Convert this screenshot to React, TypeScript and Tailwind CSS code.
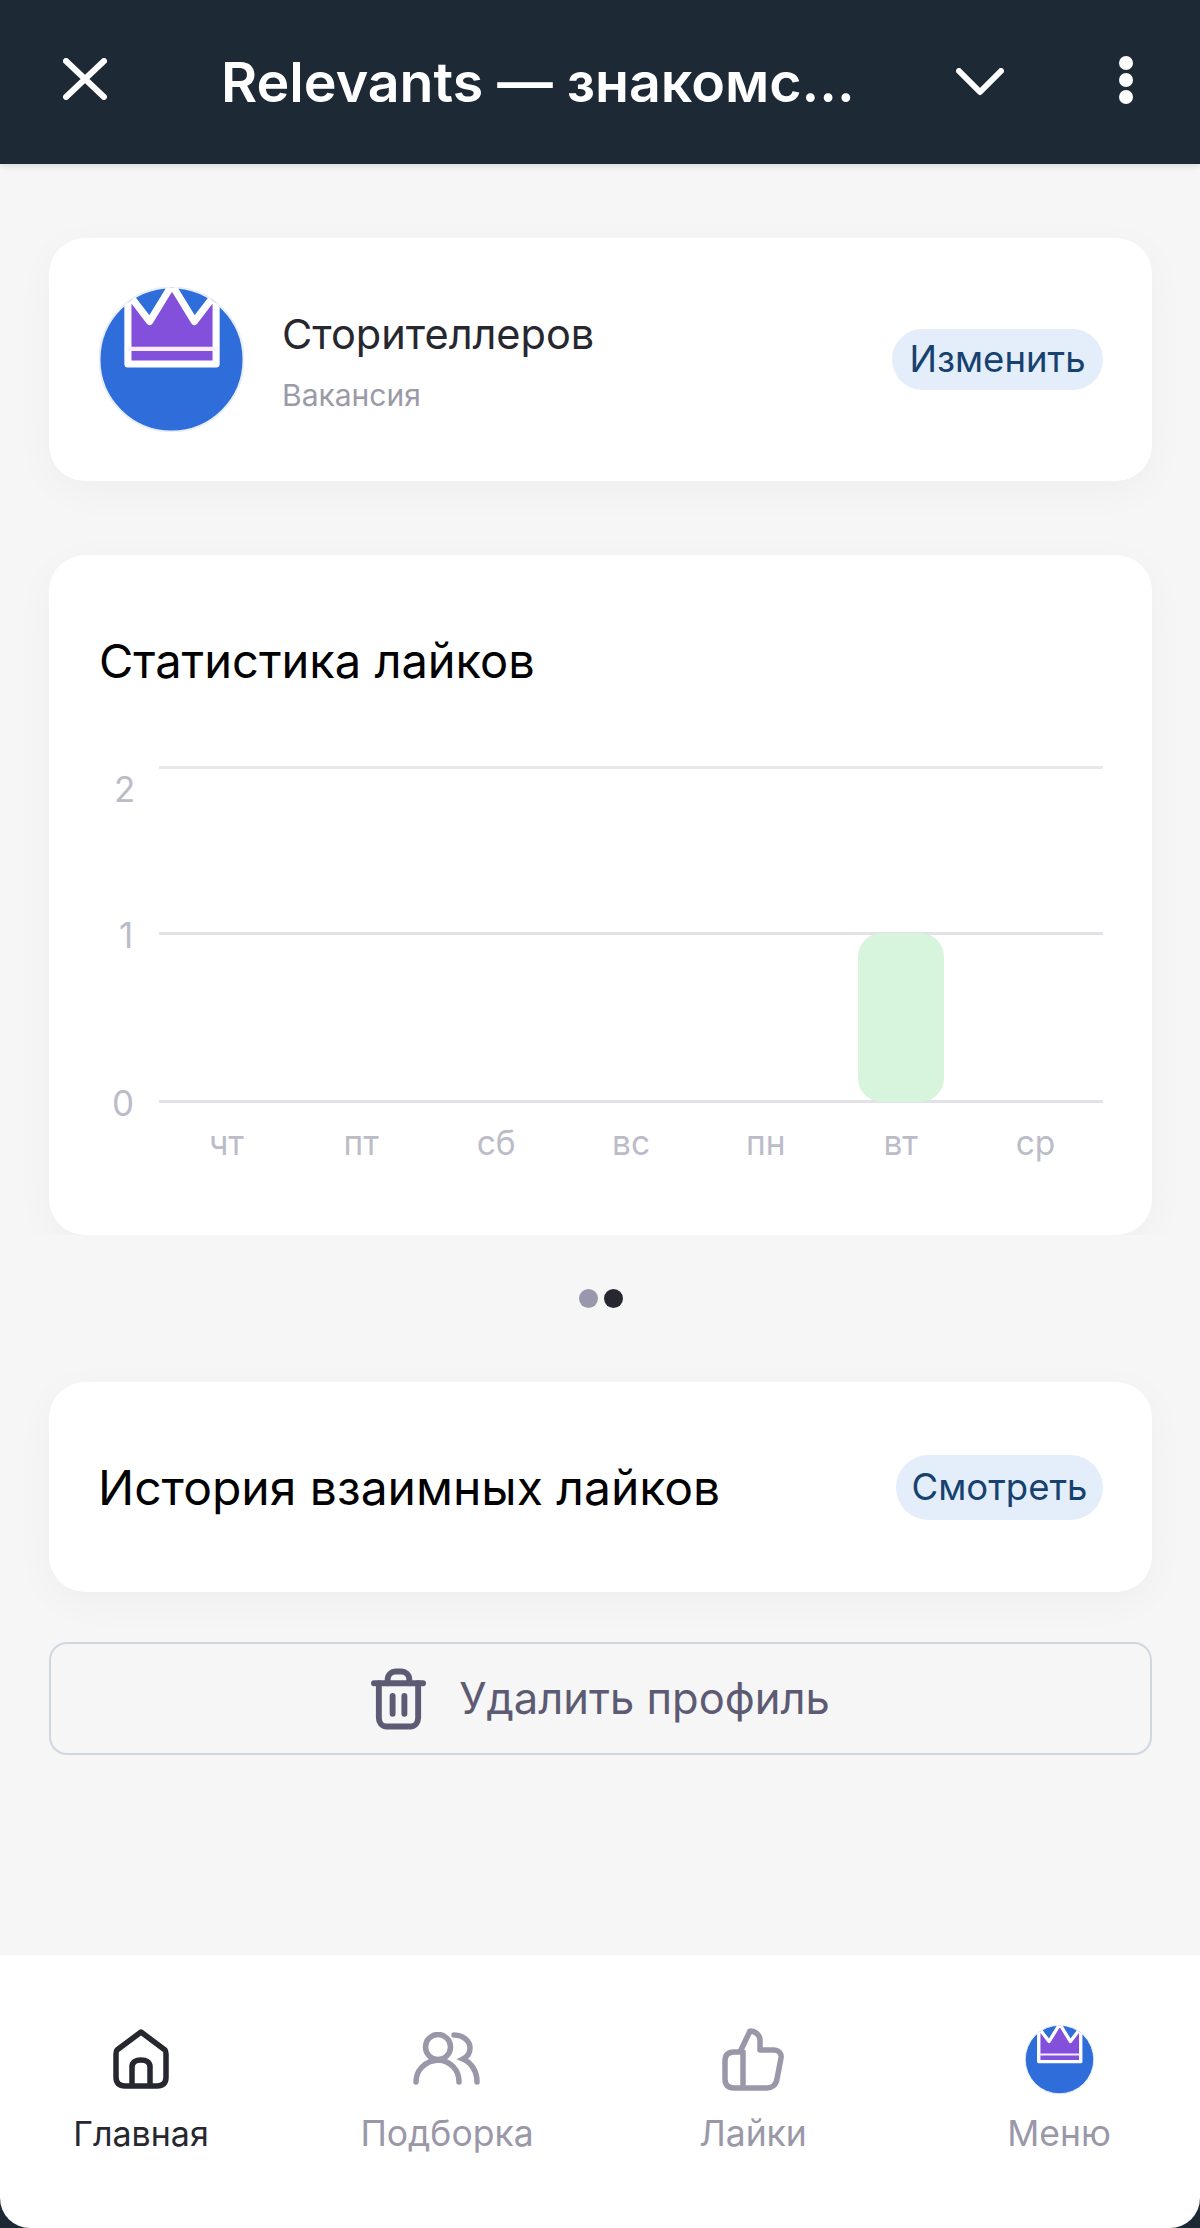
import React from "react";

function Avatar({ size, ring }: { size: number; ring: string }) {
  return (
    <svg width={size} height={size} viewBox="0 0 143 143" className="block shrink-0">
      <defs>
        <clipPath id={`clip${size}`}>
          <circle cx="71.5" cy="71.5" r="71" />
        </clipPath>
      </defs>
      <circle cx="71.5" cy="71.5" r="71" fill="#2f6ddb" stroke={ring} strokeWidth="2" />
      <g clipPath={`url(#clip${size})`}>
        <path
          d="M28.5 6 L50 34 L72 -2 L94 34 L115.5 6 V76 H28.5 Z"
          fill="#8350dc"
          stroke="#ffffff"
          strokeWidth="7"
          strokeLinejoin="round"
        />
        <path d="M28 61 H116" stroke="#f6eefc" strokeWidth="4" />
      </g>
    </svg>
  );
}

function Pill({ children, w, h }: { children: React.ReactNode; w: string; h: string }) {
  return (
    <div className={`flex items-center justify-center rounded-full bg-[#e3eefa] text-[36.5px] text-[#17416f] ${w} ${h}`}>
      {children}
    </div>
  );
}

const days = ["чт", "пт", "сб", "вс", "пн", "вт", "ср"];

function Chart() {
  return (
    <div className="mt-[75px] flex">
      <div className="flex w-[60px] flex-col text-[35px] leading-[40px] text-[#bcbcc8]">
        <div className="mt-[3px] pl-[15px]">2</div>
        <div className="mt-[106px] pl-[20px]">1</div>
        <div className="mt-[128px] pl-[13px]">0</div>
      </div>
      <div className="w-[944px]">
        <svg width="944" height="337" viewBox="0 0 944 337" className="block">
          <rect x="0" y="0" width="944" height="3" fill="#e7e7ec" />
          <rect x="0" y="166" width="944" height="3" fill="#e2e2e8" />
          <rect x="0" y="334" width="944" height="3" fill="#e2e2e8" />
          <rect x="699" y="167" width="86" height="169" rx="24" fill="#d7f4dc" />
        </svg>
        <div className="mt-[20px] grid grid-cols-7 text-center text-[33.5px] leading-[40px] text-[#bcbcc8]">
          {days.map((d) => (
            <div key={d}>{d}</div>
          ))}
        </div>
      </div>
    </div>
  );
}

function Tab({ icon, label, active }: { icon: React.ReactNode; label: string; active?: boolean }) {
  return (
    <div className={`flex w-[200px] flex-col items-center ${active ? "text-[#26272f]" : "text-[#9a98a8]"}`}>
      <div className="flex h-[70px] items-center justify-center">{icon}</div>
      <div className={`mt-[18px] leading-[44px] ${active ? "text-[34px]" : "text-[35.5px]"}`}>{label}</div>
    </div>
  );
}

export default function App() {
  return (
    <div
      className="flex h-[2228px] w-[1200px] flex-col overflow-hidden bg-[#1e2936]"
      style={{ fontFamily: '"Inter", "Noto Sans", sans-serif' }}
    >
      <header className="z-10 flex h-[164px] shrink-0 items-center bg-[#1e2936] pb-[6px] text-white shadow-[0_2px_6px_rgba(0,0,0,0.12)]">
        <svg width="44" height="42" viewBox="0 0 44 42" className="ml-[63px] shrink-0" fill="none" stroke="#fff" strokeWidth="6" strokeLinecap="round">
          <path d="M3 3 L41 39 M41 3 L3 39" />
        </svg>
        <div className="ml-[114px] mt-[5px] w-[640px] whitespace-nowrap text-[55.5px] font-semibold leading-[64px]">
          Relevants — знакомс...
        </div>
        <svg width="48" height="28" viewBox="0 0 48 28" className="ml-[95px] mt-[5px] shrink-0" fill="none" stroke="#fff" strokeWidth="6" strokeLinecap="round" strokeLinejoin="round">
          <path d="M3 3 L24 24 L45 3" />
        </svg>
        <svg width="16" height="50" viewBox="0 0 16 50" className="ml-[114px] mt-[2px] shrink-0" fill="#fff">
          <circle cx="8" cy="8" r="7" />
          <circle cx="8" cy="25" r="7" />
          <circle cx="8" cy="42" r="7" />
        </svg>
      </header>

      <main className="flex min-h-0 flex-1 flex-col bg-[#f6f6f6] pl-[49px] pr-[48px] pt-[74px]">
        <section className="flex h-[243px] shrink-0 items-center rounded-[36px] bg-white pl-[50px] pr-[49px] shadow-[0_10px_40px_rgba(0,0,0,0.035)]">
          <Avatar size={145} ring="#e6eefa" />
          <div className="ml-[38px] flex-1">
            <div className="mt-[3px] text-[41.5px] leading-[50px] text-[#26272f]">Сторителлеров</div>
            <div className="mt-[18px] text-[30px] leading-[36px] text-[#9b9aa8]">Вакансия</div>
          </div>
          <Pill w="w-[211px]" h="h-[61px]">Изменить</Pill>
        </section>

        <div className="-ml-[49px] -mr-[48px] mt-[44px] shrink-0 overflow-hidden pl-[49px] pr-[48px] pt-[30px]">
          <section className="h-[680px] rounded-[36px] bg-white pl-[50px] pt-[76px] shadow-[0_10px_40px_rgba(0,0,0,0.035)]">
            <div className="text-[47px] leading-[60px] text-black">Статистика лайков</div>
            <Chart />
          </section>
        </div>

        <div className="mt-[54px] flex h-[19px] shrink-0 justify-center gap-[6px]">
          <div className="h-[19px] w-[19px] rounded-full bg-[#9897ab]" />
          <div className="h-[19px] w-[19px] rounded-full bg-[#26272f]" />
        </div>

        <section className="mt-[74px] flex h-[210px] shrink-0 items-center justify-between rounded-[36px] bg-white pl-[49px] pr-[49px] shadow-[0_10px_40px_rgba(0,0,0,0.035)]">
          <div className="mt-[2px] text-[48px] leading-[60px] text-black">История взаимных лайков</div>
          <Pill w="w-[207px]" h="h-[65px]">Смотреть</Pill>
        </section>

        <button className="mt-[50px] flex h-[113px] shrink-0 items-center justify-center rounded-[18px] border-2 border-[#cfd7e1] text-[43.5px] text-[#5d5b73]">
          <svg width="55" height="62" viewBox="0 0 56 62" fill="none" stroke="#5d5b73" strokeWidth="6" strokeLinecap="round" strokeLinejoin="round" className="shrink-0">
            <path d="M3 15 H53" />
            <path d="M17 15 V11 C17 6 21 3 25 3 H31 C35 3 39 6 39 11 V15" />
            <path d="M8 15 V50 C8 55 11 59 16 59 H40 C45 59 48 55 48 50 V15" />
            <path d="M22 28 V46 M34 28 V46" />
          </svg>
          <span className="ml-[33px]">Удалить профиль</span>
        </button>
      </main>

      <nav className="flex h-[273px] shrink-0 justify-between rounded-b-[30px] bg-white px-[41px] pt-[69px]">
        <Tab
          active
          label="Главная"
          icon={
            <svg width="56" height="60" viewBox="0 0 56 60" fill="none" stroke="#26272f" strokeWidth="5.5" strokeLinejoin="round">
              <path d="M28 3 L52 21 C53 22 53 23 53 25 V48 C53 54 50 57 44 57 H12 C6 57 3 54 3 48 V25 C3 23 3 22 4 21 Z" />
              <path d="M19 57 V38 C19 33 23 31 28 31 C33 31 37 33 37 38 V57" />
            </svg>
          }
        />
        <Tab
          label="Подборка"
          icon={
            <svg width="68" height="54" viewBox="0 0 68 54" fill="none" stroke="#9a98a8" strokeWidth="5.5" strokeLinecap="round">
              <circle cx="25" cy="15" r="12.5" />
              <path d="M3 50 C3 38 12 29 25 28 C38 29 46 38 46 50" />
              <path d="M41 3 C50 3 57 9 57 16 C57 22 54 25 50 27 C59 31 64 40 64 50" />
            </svg>
          }
        />
        <Tab
          label="Лайки"
          icon={
            <svg width="62" height="64" viewBox="0 0 62 64" fill="none" stroke="#9a98a8" strokeWidth="5.5" strokeLinecap="round" strokeLinejoin="round">
              <path d="M18 25 L28 4 C33 4 38 8 38 13 V23 H52 C56 23 60 26 59 31 L55 52 C54 58 50 61 45 61 H12 C6 61 3 58 3 52 V34 C3 28 6 25 12 25 H21 M21 25 V61" />
            </svg>
          }
        />
        <Tab label="Меню" icon={<Avatar size={69} ring="#e6eefa" />} />
      </nav>
    </div>
  );
}
